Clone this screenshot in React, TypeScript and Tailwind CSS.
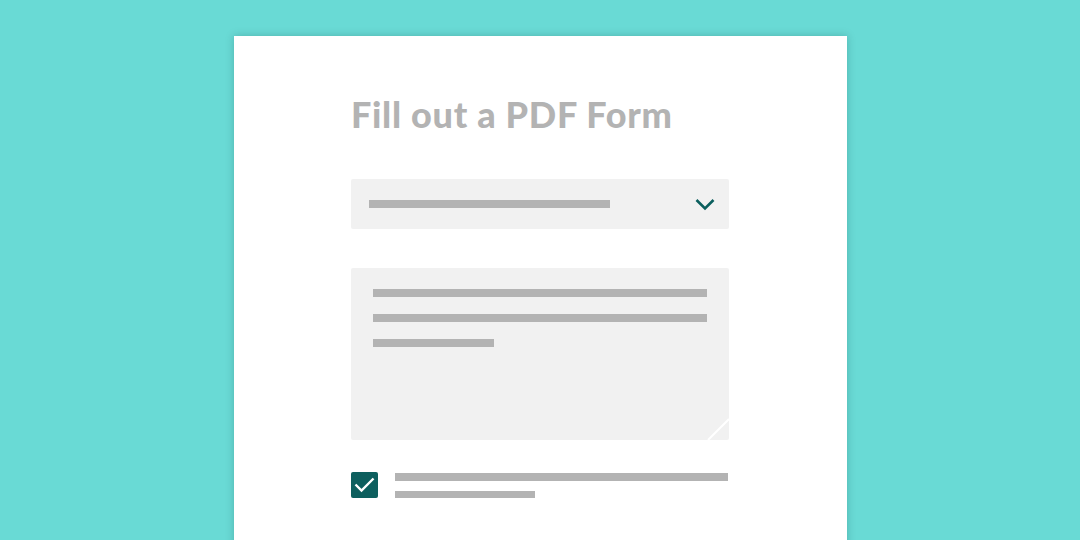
import React from 'react';

const Bar = ({ w }: { w: string }) => <div className={`h-2 bg-[#b3b3b3] ${w}`} />;

export default function App() {
  return (
    <div className="w-[1080px] h-[540px] overflow-hidden bg-[#69dad5] pt-[36px]" style={{ fontFamily: 'Lato, "Noto Sans", sans-serif' }}>
      <div className="mx-auto w-[613px] h-[600px] bg-white shadow-[0_0_8px_rgba(0,60,60,0.25)] pt-[60px]">
        <div className="mx-auto w-[378px]">
          {/* Title */}
          <h1 className="text-[36px] leading-[36px] font-black tracking-[0.7px] text-[#b3b3b3]">Fill out a PDF Form</h1>

          {/* Select */}
          <div className="mt-[47px] h-[50px] bg-[#f1f1f1] rounded-[2px] flex items-center justify-between pl-[18px] pr-[14px]">
            <div className="h-2 w-[241px] bg-[#b3b3b3]" />
            <svg width="20" height="13" viewBox="0 0 20 13" fill="none">
              <path d="M1.5 2 L10 10.5 L18.5 2" stroke="#0b5f5e" strokeWidth="2.6" />
            </svg>
          </div>

          {/* Textarea */}
          <div className="relative mt-[39px] h-[172px] bg-[#f1f1f1] rounded-[2px] px-[22px] pt-[21px] flex flex-col gap-[17px]">
            <Bar w="w-full" />
            <Bar w="w-full" />
            <Bar w="w-[121px]" />
            <svg className="absolute right-0 bottom-0" width="22" height="22" viewBox="0 0 22 22">
              <path d="M1 22 L22 1" stroke="#ffffff" strokeWidth="2" />
            </svg>
          </div>

          {/* Checkbox row */}
          <div className="mt-[32px] flex gap-[17px]">
            <div className="w-[27px] h-[26px] shrink-0 rounded-[2px] bg-[#0d5f5e] flex items-center justify-center">
              <svg width="27" height="26" viewBox="0 0 27 26" fill="none">
                <path d="M4.5 12.5 L10.5 18.5 L22.5 6.5" stroke="#ffffff" strokeWidth="2.4" />
              </svg>
            </div>
            <div className="flex-1 pt-[1px] flex flex-col gap-[10px]">
              <div className="h-2 w-[333px] bg-[#b3b3b3]" />
              <div className="h-[7px] w-[140px] bg-[#b3b3b3]" />
            </div>
          </div>
        </div>
      </div>
    </div>
  );
}
